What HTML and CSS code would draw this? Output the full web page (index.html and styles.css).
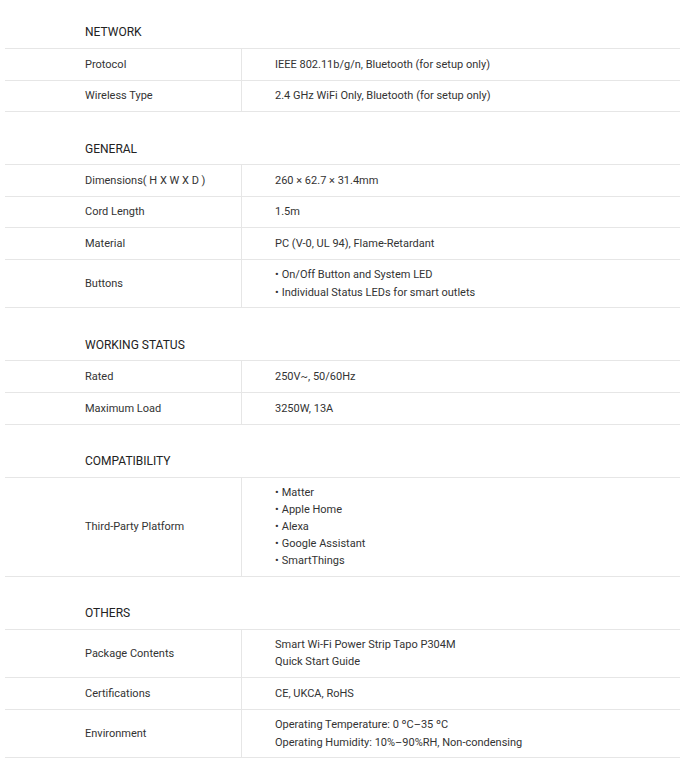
FILE: index.html
```html
<!DOCTYPE html>
<html lang="en">
<head>
  <meta charset="UTF-8" />
  <meta name="viewport" content="width=device-width, initial-scale=1.0" />
  <title>Specifications</title>
  <link rel="stylesheet" href="styles.css">
</head>
<body>
  <div class="specs">

    <!-- Network -->
    <div class="spec-group">
      <div class="group-title">NETWORK</div>
      <div class="spec-row">
        <div class="spec-label">Protocol</div>
        <div class="spec-value">IEEE 802.11b/g/n, Bluetooth (for setup only)</div>
      </div>
      <div class="spec-row">
        <div class="spec-label">Wireless Type</div>
        <div class="spec-value">2.4 GHz WiFi Only, Bluetooth (for setup only)</div>
      </div>
    </div>

    <!-- General -->
    <div class="spec-group">
      <div class="group-title">GENERAL</div>
      <div class="spec-row">
        <div class="spec-label">Dimensions( H X W X D )</div>
        <div class="spec-value">260 × 62.7 × 31.4mm</div>
      </div>
      <div class="spec-row">
        <div class="spec-label">Cord Length</div>
        <div class="spec-value">1.5m</div>
      </div>
      <div class="spec-row">
        <div class="spec-label">Material</div>
        <div class="spec-value">PC (V-0, UL 94), Flame-Retardant</div>
      </div>
      <div class="spec-row">
        <div class="spec-label">Buttons</div>
        <div class="spec-value">
          <ul class="bullets">
            <li>On/Off Button and System LED</li>
            <li>Individual Status LEDs for smart outlets</li>
          </ul>
        </div>
      </div>
    </div>

    <!-- Working status -->
    <div class="spec-group">
      <div class="group-title">WORKING STATUS</div>
      <div class="spec-row">
        <div class="spec-label">Rated</div>
        <div class="spec-value">250V~, 50/60Hz</div>
      </div>
      <div class="spec-row">
        <div class="spec-label">Maximum Load</div>
        <div class="spec-value">3250W, 13A</div>
      </div>
    </div>

    <!-- Compatibility -->
    <div class="spec-group">
      <div class="group-title">COMPATIBILITY</div>
      <div class="spec-row">
        <div class="spec-label">Third-Party Platform</div>
        <div class="spec-value">
          <ul class="bullets bullets-long">
            <li>Matter</li>
            <li>Apple Home</li>
            <li>Alexa</li>
            <li>Google Assistant</li>
            <li>SmartThings</li>
          </ul>
        </div>
      </div>
    </div>

    <!-- Others -->
    <div class="spec-group">
      <div class="group-title">OTHERS</div>
      <div class="spec-row">
        <div class="spec-label">Package Contents</div>
        <div class="spec-value">Smart Wi-Fi Power Strip Tapo P304M<br>Quick Start Guide</div>
      </div>
      <div class="spec-row">
        <div class="spec-label">Certifications</div>
        <div class="spec-value">CE, UKCA, RoHS</div>
      </div>
      <div class="spec-row">
        <div class="spec-label">Environment</div>
        <div class="spec-value">Operating Temperature: 0 ºC–35 ºC<br>Operating Humidity: 10%–90%RH, Non-condensing</div>
      </div>
    </div>

  </div>
</body>
</html>
```

FILE: styles.css
```css
:root {
  --text: #333333;
  --line: #e6e6e6;
}

* {
  box-sizing: border-box;
  margin: 0;
  padding: 0;
}

body {
  background: #ffffff;
  color: var(--text);
  font-family: Roboto, 'Liberation Sans', sans-serif;
  font-size: 11px;
  line-height: 17.25px;
}

.specs {
  padding: 14px 0 26px 5px;
}

.spec-group + .spec-group {
  margin-top: 18px;
}

.group-title {
  height: 34px;
  display: flex;
  align-items: center;
  padding: 4px 0 0 80px;
  font-size: 12px;
  color: #222;
}

.spec-row {
  display: grid;
  grid-template-columns: 237px 1fr;
  min-height: 31.6px;
  border-bottom: 1px solid var(--line);
}

.group-title + .spec-row {
  min-height: 32.6px;
  border-top: 1px solid var(--line);
}

.spec-label {
  display: flex;
  align-items: center;
  padding: 6.5px 0 6.5px 80px;
  border-right: 1px solid var(--line);
}

.spec-value {
  display: flex;
  flex-direction: column;
  justify-content: center;
  padding: 6.5px 0 6.5px 33px;
}

.bullets {
  list-style: none;
}

.bullets-long {
  line-height: 17px;
}

.bullets li::before {
  content: "•";
  margin-right: 3px;
}
```
